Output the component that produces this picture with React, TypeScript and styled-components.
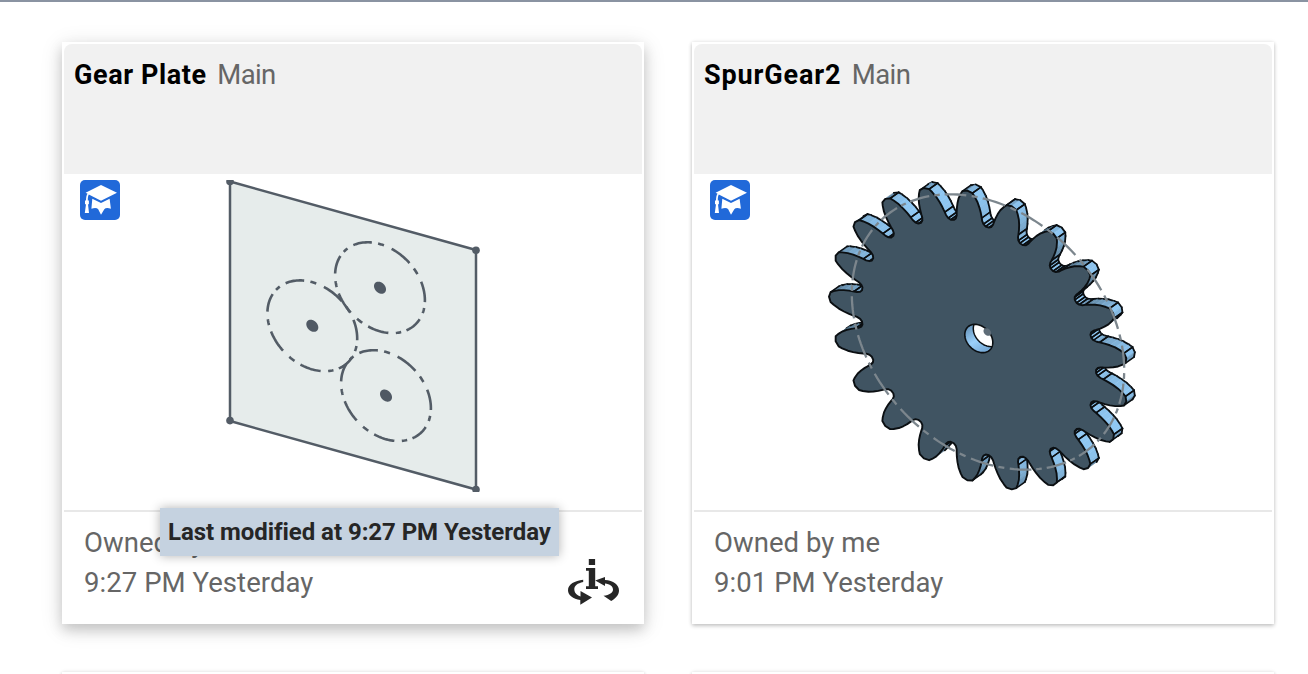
import React from "react";
import styled, { createGlobalStyle } from "styled-components";

const GlobalStyle = createGlobalStyle`
  *, *::before, *::after { box-sizing: border-box; }
  html, body { margin: 0; padding: 0; }
  body {
    background: #fff;
    font-family: Roboto, "Liberation Sans", sans-serif;
    overflow: hidden;
  }
`;

const Page = styled.div`
  height: 674px;
  overflow: hidden;
  background: #fff;
  border-top: 2px solid #8a93a2;
`;

const CardGrid = styled.main`
  display: grid;
  grid-template-columns: 582px 582px;
  grid-auto-rows: 582px;
  gap: 48px;
  padding: 40px 0 0 62px;
`;

const Card = styled.article<{ $raised?: boolean }>`
  position: relative;
  display: flex;
  flex-direction: column;
  padding: 2px;
  background: #fff;
  box-shadow: ${(p) =>
    p.$raised
      ? "0 6px 12px rgba(0,0,0,.17), 0 4px 22px rgba(0,0,0,.12)"
      : "0 2px 4px rgba(0,0,0,.2), 0 0 4px rgba(0,0,0,.1)"};
`;

const CardHeader = styled.header`
  display: flex;
  align-items: flex-start;
  gap: 10.5px;
  height: 130px;
  padding: 14px 10px;
  border-radius: 8px 8px 0 0;
  background: #f1f1f1;
  line-height: 34px;
  white-space: nowrap;
`;

const Title = styled.h2<{ $tracking: number }>`
  margin: 0;
  font-size: 27px;
  font-weight: 700;
  line-height: inherit;
  letter-spacing: ${(p) => p.$tracking}px;
  color: #000;
`;

const Workspace = styled.span`
  font-size: 27.5px;
  letter-spacing: -0.6px;
  color: #666;
`;

const Preview = styled.div`
  display: flex;
  height: 336px;
  padding: 6px 16px;
`;

const Badge = styled.div`
  display: flex;
  flex: none;
  width: 40px;
  height: 40px;
  border-radius: 5px;
  background: #2169d9;
`;

const Thumbnail = styled.svg`
  flex: none;
  width: 312px;
  height: 312px;
  margin-left: 77px;
`;

const CardFooter = styled.footer`
  display: flex;
  justify-content: space-between;
  flex: 1;
  padding: 11px 20px 0;
  border-top: 2px solid #e8e8e8;
`;

const Meta = styled.div`
  display: flex;
  flex-direction: column;
  font-size: 27.5px;
  line-height: 40px;
  color: #666;
  white-space: nowrap;
`;

const MetaLine = styled.span<{ $tracking: number }>`
  letter-spacing: ${(p) => p.$tracking}px;
`;

const InfoButton = styled.button`
  display: flex;
  width: 54px;
  height: 48px;
  margin: 35px 1px 0 0;
  padding: 0;
  border: 0;
  background: none;
`;

const Tooltip = styled.div`
  position: absolute;
  left: 98px;
  top: 466px;
  width: 399px;
  height: 48px;
  padding-left: 8px;
  background: #c5d2e0;
  box-shadow: 0 0 10px rgba(0, 0, 0, 0.3);
  color: #262626;
  font-size: 24px;
  font-weight: 700;
  line-height: 48px;
  letter-spacing: -0.05px;
  white-space: nowrap;
`;

const EducationBadge = () => (
  <Badge>
    <svg width="40" height="40" viewBox="0 0 40 40" fill="#fff">
      <path d="M21 5 37 12.8 21 20.8 8.8 14.6C8 16 7.8 17.8 7.8 20.6H8.9V24.2H8L9 33H4.8L6 24.2H5V20.6H6C6.1 17 6.5 15 7.6 13.8L5.6 12.8Z" />
      <path d="M12.3 18.8 21 23 29.6 18.8 30.9 28.7Q26 27.2 24.3 29.3L21 34.8 18.2 29.3Q16.5 27.2 11.4 28.7Z" />
    </svg>
  </Badge>
);

const InfoIcon = () => (
  <svg width="54" height="48" viewBox="567 558 54 48" fill="#262626">
    <path d="M588.8 559h6.3v6h-6.3zM586 568h9.2v18.2h2.8v2.8h-12v-2.8h2.8v-15.4h-2.8z" />
    <path d="M583.2 579.8V582C577.5 583.3 574.3 585.5 574.3 589.2 574.3 593 577.5 595.7 580.5 596.4V591L592 597.6 580.3 604.7V600C573 599 568 595 568 590.2 568 584.5 574.8 580.6 583.2 579.8Z" />
    <path d="M595.2 580.6 605 577V580C613.3 580.5 619 584.8 619 590.4 619 594.8 616 597.7 611.2 601L603.5 595.8C609.5 595 613 592.8 613 589.8 613 586.3 609.8 584 605 583.6V586Z" />
  </svg>
);

type Point = [number, number];

const RAD = Math.PI / 180;

// The drawing plane is seen at an angle: horizontal runs drop by 0.28.
const project = (cx: number, cy: number, r: number, deg: number): Point => {
  const x = Math.cos(deg * RAD);
  const y = Math.sin(deg * RAD);
  return [cx + r * x, cy + r * (0.28 * x + 0.9715 * y)];
};

const toPath = (pts: Point[]) =>
  pts.map(([x, y], i) => `${i ? "L" : "M"}${x.toFixed(2)} ${y.toFixed(2)}`).join("");

const arc = (cx: number, cy: number, r: number, from: number, to: number) => {
  const pts: Point[] = [];
  const steps = Math.max(2, Math.ceil((to - from) / 2));
  for (let i = 0; i <= steps; i++) {
    pts.push(project(cx, cy, r, from + ((to - from) * i) / steps));
  }
  return toPath(pts);
};

const chainLine = (
  cx: number, cy: number, r: number, start: number, count: number,
  long: number, gap: number, short: number,
) => {
  let d = "";
  for (let i = 0; i < count; i++) {
    const a = start + (360 / count) * i;
    d += arc(cx, cy, r, a, a + long);
    d += arc(cx, cy, r, a + long + gap, a + long + gap + short);
  }
  return d;
};

const PLATE_CIRCLES: Point[] = [[312.3, 325.8], [380, 287.7], [386, 395.6]];

const PlateDrawing = () => (
  <Thumbnail viewBox="197 180 312 312">
    <path d="M230 181.5 476 250V489.5L230 421Z" fill="#e6eceb" stroke="#535c66" strokeWidth="2.5" />
    {([[230, 181.5], [476, 250.3], [476, 489.5], [230, 420.6]] as Point[]).map(([x, y]) => (
      <circle key={`${x}-${y}`} cx={x} cy={y} r="3.8" fill="#535c66" />
    ))}
    {PLATE_CIRCLES.map(([x, y]) => (
      <g key={x}>
        <path
          d={chainLine(x, y, 44.9, -75, 7, 26, 8, 7.5)}
          fill="none"
          stroke="#535c66"
          strokeWidth="2.6"
        />
        <path d={arc(x, y, 6, 0, 360)} fill="#505964" />
      </g>
    ))}
  </Thumbnail>
);

const TEETH = 21;
const FRONT: Point = [978.5, 338.5];
const DEPTH: Point = [8.5, -6];

// Half of one tooth from the gap to the tip: radius, half width, and whether an edge is inked.
const FLANK: [number, number, boolean][] = [
  [117.6, 16, true],
  [119.2, 13.9, true],
  [122.2, 12.8, false],
  [125, 12.6, true],
  [130, 12, false],
  [135, 11, false],
  [140, 9.5, false],
  [145, 7, false],
  [148, 5, true],
];

type Vertex = { p: Point; edge: boolean };

const buildOutline = (): Vertex[] => {
  const out: Vertex[] = [];
  for (let t = 0; t < TEETH; t++) {
    const mid = 180 + (360 / TEETH) * t;
    const at = ([r, w, edge]: [number, number, boolean], side: number): Vertex => ({
      p: project(FRONT[0], FRONT[1], r, mid + (side * w) / r / RAD),
      edge,
    });
    FLANK.forEach((f) => out.push(at(f, -1)));
    out.push(at([149.5, 0, false], 1));
    [...FLANK].reverse().forEach((f) => out.push(at(f, 1)));
  }
  return out;
};

const outline = buildOutline();

const shift = ([x, y]: Point): Point => [x + DEPTH[0], y + DEPTH[1]];

const sides = outline.flatMap((v, i) => {
  const next = outline[(i + 1) % outline.length];
  const dx = next.p[0] - v.p[0];
  const dy = next.p[1] - v.p[1];
  const len = Math.hypot(dx, dy) || 1;
  const facing = (dy * DEPTH[0] - dx * DEPTH[1]) / len / Math.hypot(...DEPTH);
  if (facing <= 0.02) return [];
  const k = 0.5 + 0.5 * Math.pow(facing, 1.4);
  const fill = `rgb(${Math.round(143 * k)},${Math.round(199 * k)},${Math.round(242 * k)})`;
  return [{ a: v.p, b: next.p, fill, edgeA: v.edge, edgeB: next.edge, key: i }];
});

const GearDrawing = () => (
  <Thumbnail viewBox="827 180 312 312">
    <defs>
      <clipPath id="bore">
        <path d={arc(978.8, 338.5, 14, 0, 360)} />
      </clipPath>
      <linearGradient id="boreWall" x1="0" y1="0" x2="0.6" y2="1">
        <stop offset="0" stopColor="#5b87ad" />
        <stop offset="0.6" stopColor="#9bd0fa" />
        <stop offset="1" stopColor="#78abd8" />
      </linearGradient>
    </defs>
    <g strokeLinecap="round" strokeLinejoin="round">
      {sides.map((s) => (
        <g key={s.key}>
          <path
            d={`${toPath([s.a, s.b, shift(s.b), shift(s.a)])}Z`}
            fill={s.fill}
            stroke={s.fill}
            strokeWidth="0.6"
          />
          <path d={toPath([shift(s.a), shift(s.b)])} stroke="#0b0f12" strokeWidth="1.8" />
        </g>
      ))}
      {sides.map((s) => (
        <g key={s.key} stroke="#0b0f12" strokeWidth="1.5">
          {s.edgeA && <path d={toPath([s.a, shift(s.a)])} />}
          {s.edgeB && <path d={toPath([s.b, shift(s.b)])} />}
        </g>
      ))}
      <path
        d={`${toPath(outline.map((v) => v.p))}Z`}
        fill="#405462"
        stroke="#0b0f12"
        strokeWidth="1.9"
      />
    </g>
    <path d={arc(978.8, 338.5, 14, 0, 360)} fill="url(#boreWall)" />
    <g clipPath="url(#bore)">
      <path d={arc(987.3, 332.5, 14, 0, 360)} fill="#fff" stroke="#0b0f12" strokeWidth="1.5" />
    </g>
    <path d={arc(978.8, 338.5, 14, 0, 360)} fill="none" stroke="#0b0f12" strokeWidth="1.6" />
    <path d={arc(987.3, 332, 3.8, 0, 360)} fill="#5f6d78" />
    <path
      d={chainLine(988, 332, 136.2, -10.4, 22, 9.4, 2.3, 2.5)}
      fill="none"
      stroke="#7c868d"
      strokeWidth="2.3"
    />
  </Thumbnail>
);

type DocumentCardProps = {
  title: string;
  titleTracking: number;
  modified: string;
  modifiedTracking: number;
  hovered?: boolean;
  children: React.ReactNode;
};

const DocumentCard = ({
  title, titleTracking, modified, modifiedTracking, hovered, children,
}: DocumentCardProps) => (
  <Card $raised={hovered}>
    <CardHeader>
      <Title $tracking={titleTracking}>{title}</Title>
      <Workspace>Main</Workspace>
    </CardHeader>
    <Preview>
      <EducationBadge />
      {children}
    </Preview>
    <CardFooter>
      <Meta>
        <MetaLine $tracking={0.05}>Owned by me</MetaLine>
        <MetaLine $tracking={modifiedTracking}>{modified}</MetaLine>
      </Meta>
      {hovered && (
        <InfoButton aria-label="Show details">
          <InfoIcon />
        </InfoButton>
      )}
    </CardFooter>
    {hovered && <Tooltip role="tooltip">Last modified at {modified}</Tooltip>}
  </Card>
);

export default function App() {
  return (
    <>
      <GlobalStyle />
      <Page>
        <CardGrid>
          <DocumentCard
            title="Gear Plate"
            titleTracking={0.6}
            modified="9:27 PM Yesterday"
            modifiedTracking={0.06}
            hovered
          >
            <PlateDrawing />
          </DocumentCard>
          <DocumentCard
            title="SpurGear2"
            titleTracking={0.85}
            modified="9:01 PM Yesterday"
            modifiedTracking={0.06}
          >
            <GearDrawing />
          </DocumentCard>
          <Card />
          <Card />
        </CardGrid>
      </Page>
    </>
  );
}
